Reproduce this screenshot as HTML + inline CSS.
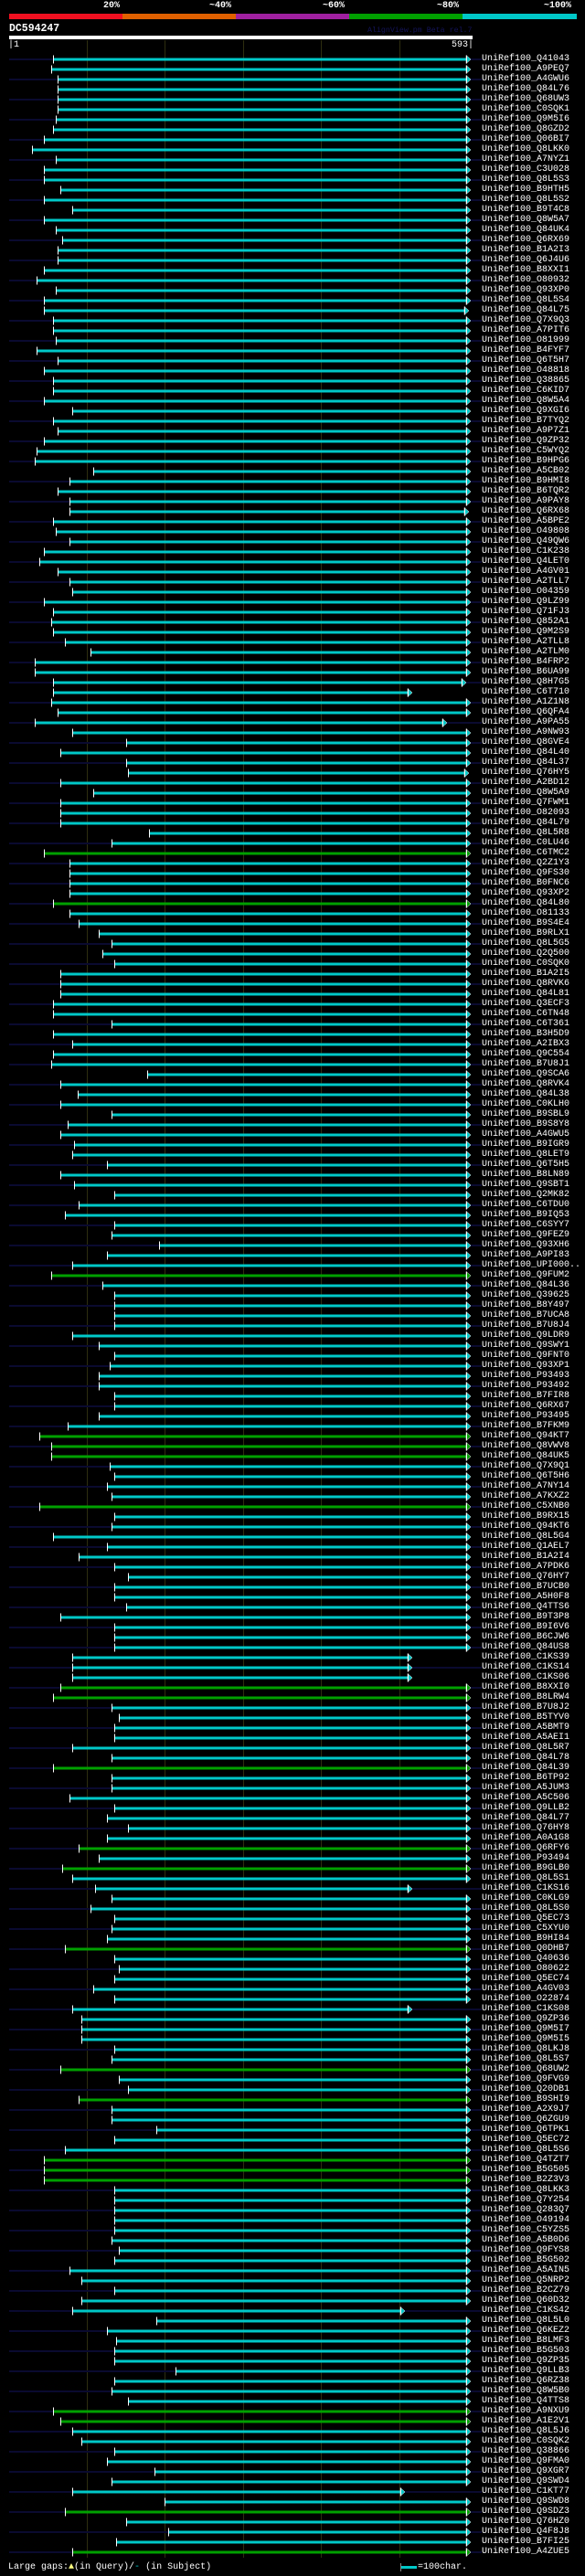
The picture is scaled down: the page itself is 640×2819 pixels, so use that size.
<!DOCTYPE html>
<html><head><meta charset="utf-8">
<style>
html,body{margin:0;padding:0;background:#000;}
body{width:640px;height:2819px;position:relative;overflow:hidden;font-family:"Liberation Mono",monospace;color:#fff;}
.t{position:absolute;white-space:pre;}
#labels{position:absolute;left:527px;top:59px;font-size:10px;line-height:11px;white-space:pre;color:#fff;}
svg{position:absolute;left:0;top:0;}
</style></head><body>
<svg id="g" width="640" height="2819" xmlns="http://www.w3.org/2000/svg">
<rect x="10" y="15" width="124" height="6" fill="#f01020"/>
<rect x="134" y="15" width="124" height="6" fill="#e06000"/>
<rect x="258" y="15" width="124" height="6" fill="#a020a0"/>
<rect x="382" y="15" width="124" height="6" fill="#00a000"/>
<rect x="506" y="15" width="125" height="6" fill="#00c8c8"/>
<rect x="10" y="39" width="507" height="4" fill="#fff"/>
<g fill="#2e2e10">
<rect x="95" y="44" width="1" height="2755"/>
<rect x="180" y="44" width="1" height="2755"/>
<rect x="266" y="44" width="1" height="2755"/>
<rect x="351" y="44" width="1" height="2755"/>
<rect x="437" y="44" width="1" height="2755"/>
</g>
<g id="rows"></g>
<rect x="438" y="2808" width="18" height="3" fill="#00c8c8"/>
<rect x="438" y="2805" width="1" height="9" fill="#888"/>
</svg>
<div class="t" style="left:113px;top:1px;font-size:10px;font-weight:bold;">20%</div>
<div class="t" style="left:229px;top:1px;font-size:10px;font-weight:bold;">~40%</div>
<div class="t" style="left:353px;top:1px;font-size:10px;font-weight:bold;">~60%</div>
<div class="t" style="left:478px;top:1px;font-size:10px;font-weight:bold;">~80%</div>
<div class="t" style="left:595px;top:1px;font-size:10px;font-weight:bold;">~100%</div>
<div class="t" style="left:10px;top:25px;font-size:11.5px;font-weight:bold;">DC594247</div>
<div class="t" style="left:402px;top:29px;font-size:8.3px;color:#14145a;">AlignView.pm Beta rel.7</div>
<div class="t" style="left:9px;top:44px;font-size:10px;">|1</div>
<div class="t" style="left:494px;top:44px;font-size:10px;">593|</div>
<div class="t" style="left:9px;top:2804px;font-size:10px;">Large gaps:<span style="color:#ffff80">▲</span>(in Query)/<span style="color:#00c8c8">-</span> (in Subject)</div>
<div class="t" style="left:457px;top:2804px;font-size:10px;">=100char.</div>
<div id="labels">UniRef100_Q41043
UniRef100_A9PEQ7
UniRef100_A4GWU6
UniRef100_Q84L76
UniRef100_Q68UW3
UniRef100_C0SQK1
UniRef100_Q9M5I6
UniRef100_Q8GZD2
UniRef100_Q06BI7
UniRef100_Q8LKK0
UniRef100_A7NYZ1
UniRef100_C3U028
UniRef100_Q8L5S3
UniRef100_B9HTH5
UniRef100_Q8L5S2
UniRef100_B9T4C8
UniRef100_Q8W5A7
UniRef100_Q84UK4
UniRef100_Q6RX69
UniRef100_B1A2I3
UniRef100_Q6J4U6
UniRef100_B8XXI1
UniRef100_O80932
UniRef100_Q93XP0
UniRef100_Q8L5S4
UniRef100_Q84L75
UniRef100_Q7X9Q3
UniRef100_A7PIT6
UniRef100_O81999
UniRef100_B4FYF7
UniRef100_Q6T5H7
UniRef100_O48818
UniRef100_Q38865
UniRef100_C6KID7
UniRef100_Q8W5A4
UniRef100_Q9XGI6
UniRef100_B7TYQ2
UniRef100_A9P7Z1
UniRef100_Q9ZP32
UniRef100_C5WYQ2
UniRef100_B9HPG6
UniRef100_A5CB02
UniRef100_B9HMI8
UniRef100_B6TQR2
UniRef100_A9PAY8
UniRef100_Q6RX68
UniRef100_A5BPE2
UniRef100_O49808
UniRef100_Q49QW6
UniRef100_C1K238
UniRef100_Q4LET0
UniRef100_A4GV01
UniRef100_A2TLL7
UniRef100_O04359
UniRef100_Q9LZ99
UniRef100_Q71FJ3
UniRef100_Q852A1
UniRef100_Q9M2S9
UniRef100_A2TLL8
UniRef100_A2TLM0
UniRef100_B4FRP2
UniRef100_B6UA99
UniRef100_Q8H7G5
UniRef100_C6T710
UniRef100_A1Z1N8
UniRef100_Q6QFA4
UniRef100_A9PA55
UniRef100_A9NW93
UniRef100_Q8GVE4
UniRef100_Q84L40
UniRef100_Q84L37
UniRef100_Q76HY5
UniRef100_A2BD12
UniRef100_Q8W5A9
UniRef100_Q7FWM1
UniRef100_O82093
UniRef100_Q84L79
UniRef100_Q8L5R8
UniRef100_C0LU46
UniRef100_C6TMC2
UniRef100_Q2Z1Y3
UniRef100_Q9FS30
UniRef100_B0FNC6
UniRef100_Q93XP2
UniRef100_Q84L80
UniRef100_O81133
UniRef100_B9S4E4
UniRef100_B9RLX1
UniRef100_Q8L5G5
UniRef100_Q2Q500
UniRef100_C0SQK0
UniRef100_B1A2I5
UniRef100_Q8RVK6
UniRef100_Q84L81
UniRef100_Q3ECF3
UniRef100_C6TN48
UniRef100_C6T361
UniRef100_B3H5D9
UniRef100_A2IBX3
UniRef100_Q9C554
UniRef100_B7U8J1
UniRef100_Q9SCA6
UniRef100_Q8RVK4
UniRef100_Q84L38
UniRef100_C0KLH0
UniRef100_B9SBL9
UniRef100_B9S8Y8
UniRef100_A4GWU5
UniRef100_B9IGR9
UniRef100_Q8LET9
UniRef100_Q6T5H5
UniRef100_B8LN89
UniRef100_Q9SBT1
UniRef100_Q2MK82
UniRef100_C6TDU0
UniRef100_B9IQ53
UniRef100_C6SYY7
UniRef100_Q9FEZ9
UniRef100_Q93XH6
UniRef100_A9PI83
UniRef100_UPI000..
UniRef100_Q9FUM2
UniRef100_Q84L36
UniRef100_Q39625
UniRef100_B8Y497
UniRef100_B7UCA8
UniRef100_B7U8J4
UniRef100_Q9LDR9
UniRef100_Q9SWY1
UniRef100_Q9FNT0
UniRef100_Q93XP1
UniRef100_P93493
UniRef100_P93492
UniRef100_B7FIR8
UniRef100_Q6RX67
UniRef100_P93495
UniRef100_B7FKM9
UniRef100_Q94KT7
UniRef100_Q8VWV8
UniRef100_Q84UK5
UniRef100_Q7X9Q1
UniRef100_Q6T5H6
UniRef100_A7NY14
UniRef100_A7KXZ2
UniRef100_C5XNB0
UniRef100_B9RX15
UniRef100_Q94KT6
UniRef100_Q8L5G4
UniRef100_Q1AEL7
UniRef100_B1A2I4
UniRef100_A7PDK6
UniRef100_Q76HY7
UniRef100_B7UCB0
UniRef100_A5H0F8
UniRef100_Q4TTS6
UniRef100_B9T3P8
UniRef100_B9I6V6
UniRef100_B6CJW6
UniRef100_Q84US8
UniRef100_C1KS39
UniRef100_C1KS14
UniRef100_C1KS06
UniRef100_B8XXI0
UniRef100_B8LRW4
UniRef100_B7U8J2
UniRef100_B5TYV0
UniRef100_A5BMT9
UniRef100_A5AEI1
UniRef100_Q8L5R7
UniRef100_Q84L78
UniRef100_Q84L39
UniRef100_B6TP92
UniRef100_A5JUM3
UniRef100_A5C506
UniRef100_Q9LLB2
UniRef100_Q84L77
UniRef100_Q76HY8
UniRef100_A0A1G8
UniRef100_Q6RFY6
UniRef100_P93494
UniRef100_B9GLB0
UniRef100_Q8L5S1
UniRef100_C1KS16
UniRef100_C0KLG9
UniRef100_Q8L5S0
UniRef100_Q5EC73
UniRef100_C5XYU0
UniRef100_B9HI84
UniRef100_Q0DHB7
UniRef100_Q40636
UniRef100_O80622
UniRef100_Q5EC74
UniRef100_A4GV03
UniRef100_O22874
UniRef100_C1KS08
UniRef100_Q9ZP36
UniRef100_Q9M5I7
UniRef100_Q9M5I5
UniRef100_Q8LKJ8
UniRef100_Q8L5S7
UniRef100_Q68UW2
UniRef100_Q9FVG9
UniRef100_Q20DB1
UniRef100_B9SHI9
UniRef100_A2X9J7
UniRef100_Q6ZGU9
UniRef100_Q6TPK1
UniRef100_Q5EC72
UniRef100_Q8L5S6
UniRef100_Q4TZT7
UniRef100_B5G505
UniRef100_B2Z3V3
UniRef100_Q8LKK3
UniRef100_Q7Y254
UniRef100_Q283Q7
UniRef100_O49194
UniRef100_C5YZS5
UniRef100_A5B0D6
UniRef100_Q9FYS8
UniRef100_B5G502
UniRef100_A5AIN5
UniRef100_Q5NRP2
UniRef100_B2CZ79
UniRef100_Q60D32
UniRef100_C1KS42
UniRef100_Q8L5L0
UniRef100_Q6KEZ2
UniRef100_B8LMF3
UniRef100_B5G503
UniRef100_Q9ZP35
UniRef100_Q9LLB3
UniRef100_Q6RZ38
UniRef100_Q8W5B0
UniRef100_Q4TTS8
UniRef100_A9NXU9
UniRef100_A1E2V1
UniRef100_Q8L5J6
UniRef100_C0SQK2
UniRef100_Q38866
UniRef100_Q9FMA0
UniRef100_Q9XGR7
UniRef100_Q9SWD4
UniRef100_C1KT77
UniRef100_Q9SWD8
UniRef100_Q9SDZ3
UniRef100_Q76HZ0
UniRef100_Q4F8J8
UniRef100_B7FI25
UniRef100_A4ZUE5</div>
<script>
(function(){
var S=[173,167,187,187,187,187,181,173,143,105,181,143,143,196,143,235,143,181,202,187,187,143,119,181,143,143,173,173,181,119,187,143,173,173,143,235,173,187,143,119,113,303,
226,187,226,226,173,181,226,143,128,187,226,235,143,173,167,173,211,294,113,113,173,173,167,187,113,235,409,196,409,415,196,303,196,196,196,483,362,143,226,226,226,
226,173,226,255,318,362,332,371,196,196,196,173,173,362,173,235,173,167,477,196,250,196,362,220,196,241,235,347,196,241,371,255,211,371,362,516,347,235,167,332,371,371,
371,371,235,318,371,356,318,318,371,371,318,220,128,167,167,356,371,347,362,128,371,362,173,347,255,371,415,371,371,409,196,371,371,371,235,235,235,196,173,362,386,371,
371,235,362,173,362,362,226,371,347,415,347,255,318,202,235,309,362,294,371,362,347,211,371,386,371,303,371,235,264,264,264,371,362,196,386,415,255,362,362,507,371,211,
143,143,143,371,371,371,371,371,362,386,371,226,264,371,264,235,507,347,377,371,371,569,371,362,415,173,196,235,264,371,347,501,362,235,531,211,409,545,377,235];
var G=[79,84,121,137,138,139,144,162,163,170,178,180,188,200,203,209,210,211,234,235,244,248];
var E={25:1502,45:1502,62:1495,63:1320,66:1432,71:1502,159:1320,160:1320,161:1320,182:1320,194:1320,224:1297,242:1297};
var k=2.958,h='';
for(var i=0;i<S.length;i++){
 var y=65+11*i;
 var s=Math.round(S[i]/k);
 var e=Math.round((E[i]||1510)/k);
 var c=G.indexOf(i)>=0?'#00a000':'#00c8c8';
 if(i%2==0) h+='<rect x="10" y="'+(y-1)+'" width="517" height="2" fill="#0a0a30"/>';
 h+='<rect x="'+s+'" y="'+(y-1.5)+'" width="'+(e-s)+'" height="3" fill="'+c+'"/>';
 h+='<rect x="'+s+'" y="'+(y-4.5)+'" width="1" height="9" fill="#fff"/>';
 h+='<polygon points="'+e+','+(y-4.5)+' '+(e+5)+','+y+' '+e+','+(y+4.5)+'" fill="'+c+'" stroke="#fff" stroke-width="0.5"/>';
 h+='<rect x="'+e+'" y="'+(y-4.5)+'" width="1" height="9" fill="#fff"/>';
}
document.getElementById('rows').innerHTML=h;
})();
</script>
</body></html>
